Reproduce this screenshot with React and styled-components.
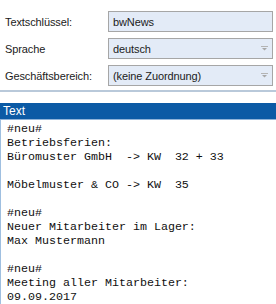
import styled, { createGlobalStyle } from 'styled-components';

const GlobalStyle = createGlobalStyle`
  html, body {
    margin: 0;
    padding: 0;
    background: #ffffff;
  }
`

const fields = [
    { label: 'Textschlüssel:', value: 'bwNews', select: false },
    { label: 'Sprache', value: 'deutsch', select: true },
    { label: 'Geschäftsbereich:', value: '(keine Zuordnung)', select: true },
]

const lines = [
    '#neu#',
    'Betriebsferien:',
    'Büromuster GmbH  -> KW  32 + 33',
    '',
    'Möbelmuster & CO -> KW  35',
    '',
    '#neu#',
    'Neuer Mitarbeiter im Lager:',
    'Max Mustermann',
    '',
    '#neu#',
    'Meeting aller Mitarbeiter:',
    '09.09.2017',
]

const Arrow = () => (
    <svg width="7" height="5" viewBox="0 0 7 5">
        <rect x="0" y="0" width="7" height="1" fill="#b4b4b4" />
        <path d="M1 2 H6 L3.5 4.5 Z" fill="#a8a8a8" />
    </svg>
)

const App = () => {
    return (
        <Page>
            <GlobalStyle />
            <Form>
                {fields.map((f) => (
                    <Row key={f.label}>
                        <Label>{f.label}</Label>
                        <Field>
                            <FieldText>{f.value}</FieldText>
                            {f.select && <Arrow />}
                        </Field>
                    </Row>
                ))}
            </Form>
            <Divider />
            <Header>Text</Header>
            <Editor>
                {lines.map((l, i) => (
                    <Line key={i}>{l || '\u00a0'}</Line>
                ))}
            </Editor>
        </Page>
    )
}

export default App

const Page = styled.div`
  width: 276px;
  height: 304px;
  overflow: hidden;
  display: flex;
  flex-direction: column;
`

const Form = styled.div`
  display: flex;
  flex-direction: column;
  gap: 6px;
  padding: 11px 3px 0 5px;
`

const Row = styled.div`
  display: grid;
  grid-template-columns: 103px 1fr;
  align-items: center;
`

const Label = styled.div`
  font-family: "Liberation Sans", Arial, sans-serif;
  font-size: 11px;
  letter-spacing: -0.1px;
  color: #1b1b1b;
`

const Field = styled.div`
  height: 21px;
  box-sizing: border-box;
  border: 1px solid #a6a6a6;
  background: #e3ebf7;
  display: flex;
  align-items: center;
  justify-content: space-between;
  padding: 0 4px 0 4px;
`

const FieldText = styled.span`
  font-family: "Liberation Sans", Arial, sans-serif;
  font-size: 11px;
  letter-spacing: -0.1px;
  color: #1b1b1b;
`

const Divider = styled.div`
  margin-top: 4px;
  height: 2px;
  background: #b9c9da;
`

const Header = styled.div`
  margin-top: 11px;
  height: 16px;
  background: #0b5aa5;
  color: #ffffff;
  font-family: "Liberation Sans", Arial, sans-serif;
  font-size: 12px;
  line-height: 16px;
  padding-left: 3px;
  border-bottom: 1px solid #8fb3d9;
`

const Editor = styled.div`
  flex: 1;
  border-left: 1px solid #9fbfe0;
  padding: 2px 0 0 6px;
`

const Line = styled.div`
  font-family: "Liberation Mono", "Courier New", monospace;
  font-size: 11.67px;
  line-height: 14px;
  height: 14px;
  white-space: pre;
  color: #101010;
`
